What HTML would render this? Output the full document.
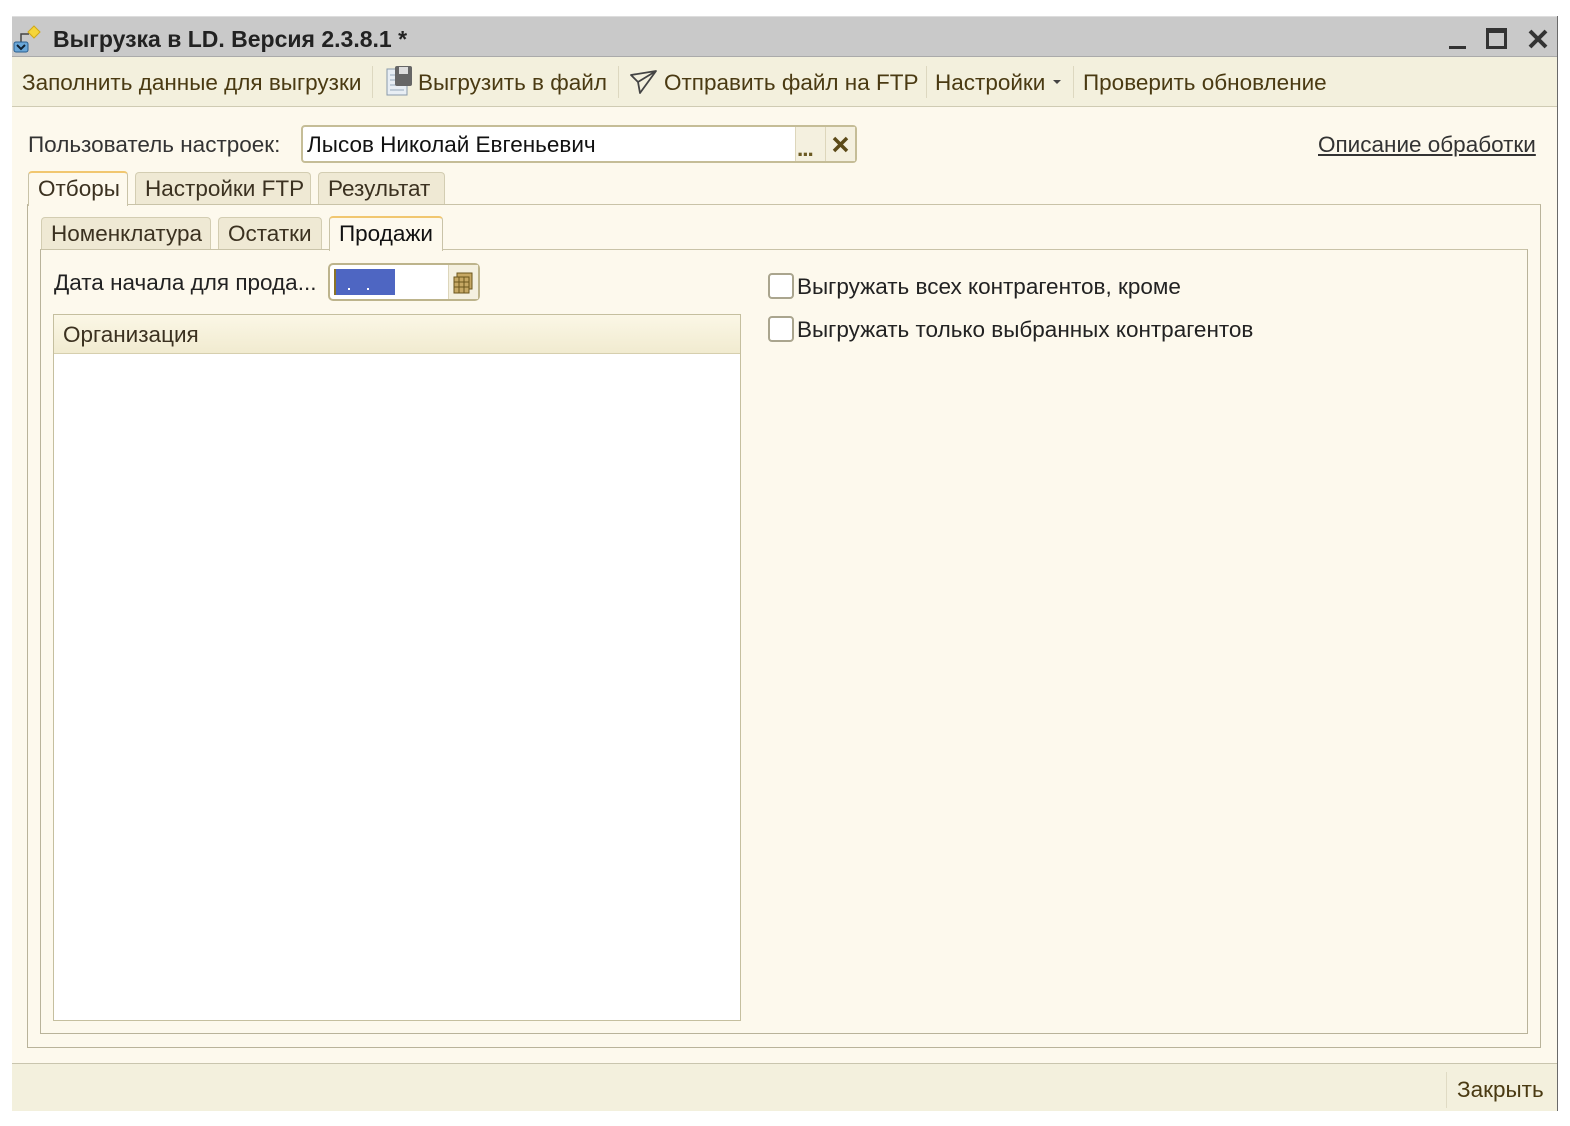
<!DOCTYPE html>
<html><head><meta charset="utf-8"><style>
*{box-sizing:border-box;margin:0;padding:0}
body{width:1570px;height:1126px;background:#fff;position:relative;font-family:"Liberation Sans",sans-serif;font-size:22.5px;color:#3b3120;overflow:hidden}
.a{position:absolute}
.t{position:absolute;white-space:nowrap;line-height:24px}
</style></head><body>
<div class="a" style="left:12px;top:16px;width:1546px;height:1095px;background:#fdf9ed;border-right:1px solid #6a6a6a"></div>
<!-- title -->
<div class="a" style="left:12px;top:16px;width:1545px;height:41px;background:#c9c9c9;border-top:1px solid #ddd;border-bottom:1px solid #aaa"></div>
<svg class="a" style="left:11px;top:22px" width="34" height="32" viewBox="0 0 34 32"><path d="M10 22V12h8" stroke="#444" stroke-width="1.5" fill="none"/><path d="M23 4l6 6-6 6-6-6z" fill="#f5d53a" stroke="#d0a818"/><rect x="3" y="20" width="14" height="10" rx="2" fill="#6aa7d8" stroke="#2c5f8f"/><path d="M6 23l4 4 4-4" stroke="#123" stroke-width="2" fill="none"/></svg>
<div class="t" style="left:53px;top:27px;font-size:23px;color:#222;font-weight:bold">Выгрузка в LD. Версия 2.3.8.1 *</div>
<div class="a" style="left:1449px;top:46px;width:17px;height:3px;background:#333"></div>
<div class="a" style="left:1486px;top:28px;width:21px;height:21px;border:3px solid #333;border-top-width:5px"></div>
<svg class="a" style="left:1527px;top:28px" width="22" height="22"><path d="M3 3L19 19M19 3L3 19" stroke="#333" stroke-width="4"/></svg>
<!-- toolbar -->
<div class="a" style="left:12px;top:57px;width:1545px;height:50px;background:#f3f0dd;border-bottom:1px solid #cfcbb3"></div>
<div class="t" style="left:22px;top:71px;color:#4a3a12">Заполнить данные для выгрузки</div>
<div class="a" style="left:372px;top:66px;width:1px;height:32px;background:#ddd8c0"></div>
<svg class="a" style="left:385px;top:65px" width="30" height="32"><rect x="2" y="4" width="20" height="26" fill="#e8eef4" stroke="#8a9aaa"/><path d="M5 10h14M5 15h14M5 20h14M5 25h14" stroke="#9ab"/><rect x="10" y="1" width="17" height="20" rx="2" fill="#666"/><rect x="14" y="2" width="9" height="7" fill="#ddd"/></svg>
<div class="t" style="left:418px;top:71px;color:#4a3a12">Выгрузить в файл</div>
<div class="a" style="left:618px;top:66px;width:1px;height:32px;background:#ddd8c0"></div>
<svg class="a" style="left:629px;top:69px" width="30" height="26"><path d="M2 6L27 2L11 24L9 13Z M9 13L27 2" stroke="#444" stroke-width="1.8" fill="none" stroke-linejoin="round"/></svg>
<div class="t" style="left:664px;top:71px;color:#4a3a12">Отправить файл на FTP</div>
<div class="a" style="left:926px;top:66px;width:1px;height:32px;background:#ddd8c0"></div>
<div class="t" style="left:935px;top:71px;color:#4a3a12">Настройки</div>
<div class="a" style="left:1053px;top:80px;border-left:4px solid transparent;border-right:4px solid transparent;border-top:4px solid #444"></div>
<div class="a" style="left:1073px;top:66px;width:1px;height:32px;background:#ddd8c0"></div>
<div class="t" style="left:1083px;top:71px;color:#4a3a12">Проверить обновление</div>
<!-- user row -->
<div class="t" style="left:28px;top:133px;color:#333">Пользователь настроек:</div>
<div class="a" style="left:301px;top:125px;width:556px;height:38px;background:#fff;border:2px solid #c5bd97;border-radius:4px"></div>
<div class="a" style="left:795px;top:127px;width:60px;height:34px;background:#f4f0df;border-left:1px solid #ddd6bb"></div>
<div class="a" style="left:825px;top:127px;width:1px;height:34px;background:#ddd6bb"></div>
<div class="t" style="left:797px;top:137px;font-weight:bold;color:#6b5a22;letter-spacing:-1px">...</div>
<svg class="a" style="left:832px;top:136px" width="17" height="17"><path d="M2 2L15 15M15 2L2 15" stroke="#5c4a18" stroke-width="3.5"/></svg>
<div class="t" style="left:307px;top:133px;color:#111">Лысов Николай Евгеньевич</div>
<div class="t" style="left:1318px;top:133px;text-decoration:underline;color:#333">Описание обработки</div>
<!-- outer tabs -->
<div class="a" style="left:27px;top:204px;width:1514px;height:844px;border:1px solid #b9b39a;border-top-color:#c9c3a8"></div>
<div class="a" style="left:28px;top:171px;width:100px;height:35px;background:#fdf9ed;border:1px solid #c9c3a8;border-bottom:none;border-top:2px solid #f1c770;border-radius:4px 4px 0 0"></div>
<div class="t" style="left:38px;top:177px">Отборы</div>
<div class="a" style="left:135px;top:172px;width:176px;height:32px;background:#efe9d4;border:1px solid #d3cdb2;border-bottom:none;border-radius:4px 4px 0 0"></div>
<div class="t" style="left:145px;top:177px">Настройки FTP</div>
<div class="a" style="left:318px;top:172px;width:127px;height:32px;background:#efe9d4;border:1px solid #d3cdb2;border-bottom:none;border-radius:4px 4px 0 0"></div>
<div class="t" style="left:328px;top:177px">Результат</div>
<!-- inner tabs -->
<div class="a" style="left:40px;top:249px;width:1488px;height:785px;border:1px solid #b9b39a;border-top-color:#c9c3a8"></div>
<div class="a" style="left:41px;top:217px;width:170px;height:32px;background:#efe9d4;border:1px solid #d3cdb2;border-bottom:none;border-radius:4px 4px 0 0"></div>
<div class="t" style="left:51px;top:222px">Номенклатура</div>
<div class="a" style="left:218px;top:217px;width:104px;height:32px;background:#efe9d4;border:1px solid #d3cdb2;border-bottom:none;border-radius:4px 4px 0 0"></div>
<div class="t" style="left:228px;top:222px">Остатки</div>
<div class="a" style="left:329px;top:216px;width:114px;height:35px;background:#fdf9ed;border:1px solid #c9c3a8;border-bottom:none;border-top:2px solid #f1c770;border-radius:4px 4px 0 0"></div>
<div class="t" style="left:339px;top:222px;color:#111">Продажи</div>
<!-- date -->
<div class="t" style="left:54px;top:271px;color:#222">Дата начала для прода...</div>
<div class="a" style="left:328px;top:263px;width:152px;height:38px;background:#fff;border:2px solid #bdb48c;border-radius:5px"></div>
<div class="a" style="left:448px;top:265px;width:30px;height:34px;background:#f4f0df;border-left:1px solid #ddd6bb"></div>
<svg class="a" style="left:453px;top:272px" width="22" height="22"><rect x="4" y="1" width="15" height="16" fill="#c6a864" stroke="#6b561c"/><rect x="1" y="5" width="15" height="16" fill="#c6a864" stroke="#6b561c"/><path d="M1 10h15M1 15h15M6 5v16M11 5v16" stroke="#6b561c"/></svg>
<div class="a" style="left:334px;top:269px;width:61px;height:26px;background:#4e66c2;border-left:2px solid #8a7428"></div>
<div class="a" style="left:348px;top:288px;width:2px;height:2px;background:#fff"></div>
<div class="a" style="left:367px;top:288px;width:2px;height:2px;background:#fff"></div>
<!-- table -->
<div class="a" style="left:53px;top:314px;width:688px;height:707px;background:#fff;border:1px solid #c5bf9f"></div>
<div class="a" style="left:54px;top:315px;width:686px;height:39px;background:linear-gradient(#fbf7e6,#f1ebd0);border-bottom:1px solid #d6cfae"></div>
<div class="t" style="left:63px;top:323px">Организация</div>
<!-- checkboxes -->
<div class="a" style="left:768px;top:273px;width:26px;height:26px;background:#fff;border:2px solid #aaa58e;border-radius:4px"></div>
<div class="t" style="left:797px;top:275px;color:#222">Выгружать всех контрагентов, кроме</div>
<div class="a" style="left:768px;top:316px;width:26px;height:26px;background:#fff;border:2px solid #aaa58e;border-radius:4px"></div>
<div class="t" style="left:797px;top:318px;color:#222">Выгружать только выбранных контрагентов</div>
<!-- footer -->
<div class="a" style="left:12px;top:1063px;width:1545px;height:48px;background:#f3f0dd;border-top:1px solid #c9c5ae"></div>
<div class="a" style="left:1446px;top:1072px;width:1px;height:36px;background:#e0dbc4"></div>
<div class="t" style="left:1457px;top:1078px;color:#4a3a12">Закрыть</div>
</body></html>
